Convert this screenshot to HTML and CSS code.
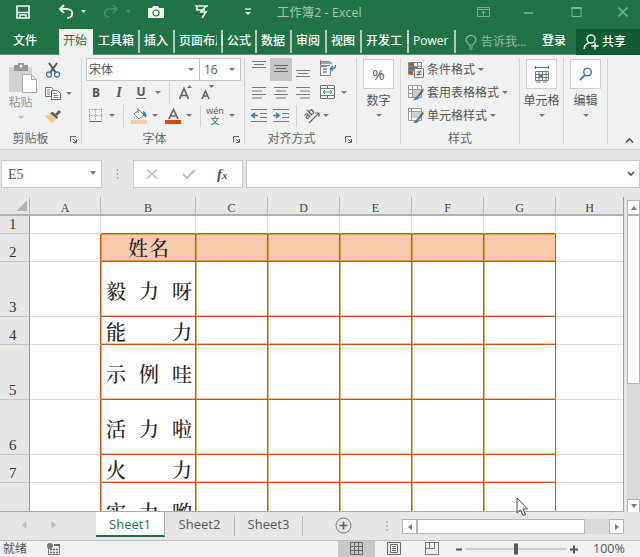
FILE: index.html
```html
<!DOCTYPE html>
<html lang="zh-CN">
<head>
<meta charset="utf-8">
<title>工作簿2 - Excel</title>
<link rel="stylesheet" href="styles.css">
</head>
<body>
<div class="app">
<header class="titlebar">
  <svg width="14" height="14" viewBox="0 0 14 14"><path d="M1 1h12v12H1z" fill="none" stroke="#f2f7f4" stroke-width="1.6"/><path d="M1 7.500h12" stroke="#f2f7f4" stroke-width="1.500"/><path d="M4 13v-3h6v3" fill="none" stroke="#f2f7f4" stroke-width="1.500"/></svg>
  <svg width="32" height="16" viewBox="0 0 32 16"><path d="M6 1L2 5l4 4M2.500 5H9c7 0 7 9 0 9" fill="none" stroke="#f2f7f4" stroke-width="2"/><path d="M23 6h5l-2.500 3z" fill="#e4efe8"/></svg>
  <svg width="32" height="16" viewBox="0 0 32 16"><path d="M11 1l4 4-4 4M14.500 5H8C1 5 1 13 7 13" fill="none" stroke="#4f8d69" stroke-width="1.500"/><path d="M24 6h5l-2.500 3z" fill="#4f8d69"/></svg>
  <svg width="18" height="14" viewBox="0 0 18 14"><path d="M1 3h4l1-2h5l1 2h5v10H1z" fill="#f2f7f4"/><circle cx="9" cy="8" r="3" fill="none" stroke="#217346" stroke-width="1.200"/></svg>
  <svg width="16" height="16" viewBox="0 0 16 16"><path d="M0 2h13M2 2v4h8M11 2L6 8h5l-4 6" fill="none" stroke="#f2f7f4" stroke-width="1.600"/></svg>
  <svg width="8" height="10" viewBox="0 0 8 10"><path d="M1 2h6" stroke="#f2f7f4" stroke-width="1.300"/><path d="M1 5h6L4 8z" fill="#f2f7f4"/></svg>
  <span class="doc">工作簿2 - Excel</span>
  <svg width="14" height="12" viewBox="0 0 14 12"><path d="M.5 1.500h12v9H.5zM.5 3.500h12M6.500 9.500V5M4.500 7l2-2 2 2" fill="none" stroke="#80ae93"/></svg>
  <svg width="10" height="12" viewBox="0 0 10 12"><path d="M0 7h9" stroke="#80ae93" stroke-width="1.500"/></svg>
  <svg width="12" height="12" viewBox="0 0 12 12"><path d="M1 1.500h9v9H1z" fill="none" stroke="#80ae93"/><path d="M.5 2h10" stroke="#80ae93" stroke-width="2"/></svg>
  <svg width="12" height="12" viewBox="0 0 12 12"><path d="M1.500 1.500l9 9M10.500 1.500l-9 9" stroke="#80ae93" stroke-width="1.700"/></svg>
</header>
<nav class="tabs">
  <span class="tab file">文件</span><span class="tab active">开始</span><span class="tab cut">工具箱</span><span class="tab cut">插入</span><span class="tab cut clip">页面布局</span><span class="tab cut">公式</span><span class="tab cut">数据</span><span class="tab cut">审阅</span><span class="tab cut">视图</span><span class="tab cut clip">开发工具</span><span class="tab cut">Power</span>
  <span class="tell"><svg width="12" height="15" viewBox="0 0 12 15"><path d="M4 10C3 8 1 7 1 5a5 4.500 0 0 1 10 0c0 2-2 3-3 5zM4 12h4M4.500 14h3" fill="none" stroke="#91baa1" stroke-width="1.200"/></svg>告诉我...</span>
  <span class="tab">登录</span>
  <span class="share"><svg width="16" height="16" viewBox="0 0 16 16"><circle cx="8" cy="5" r="4" fill="none" stroke="#fff" stroke-width="1.400"/><path d="M1 15c.3-3 2-5 5-6.300M12 8.500v7M8.500 12h7" fill="none" stroke="#fff" stroke-width="1.400"/></svg>共享</span>
</nav>
<section class="ribbon">
  <div class="group clipboard">
    <div class="body clipbody">
      <div class="paste">
        <svg width="30" height="32" viewBox="0 0 30 32"><path d="M1 5h23v25H1z" fill="#d3d1d4"/><path d="M6 3h4V1h6v2h4v6H6z" fill="#99979a"/><circle cx="13" cy="4" r="1.500" fill="#eee"/><path d="M14.500 12.500h9l5 5v13h-14z" fill="#fff" stroke="#a9a9ab"/><path d="M23.500 12.500v5h5" fill="none" stroke="#a9a9ab"/></svg>
        <span>粘贴</span><i class="arr pale"></i>
      </div>
      <div class="clips">
        <svg width="16" height="16" viewBox="0 0 16 16"><path d="M4 1l7 10M12 1L5 11" stroke="#555" stroke-width="2" fill="none"/><circle cx="4" cy="12.500" r="2.500" fill="none" stroke="#3f81ab" stroke-width="1.300"/><circle cx="12" cy="12.500" r="2.500" fill="none" stroke="#3f81ab" stroke-width="1.300"/></svg>
        <div class="pair"><svg width="16" height="15" viewBox="0 0 16 15"><path d="M.5 1.500h6l2 2v7h-8z" fill="#fff" stroke="#777"/><path d="M6.500 4.500h6l3 3v6h-9z" fill="#fff" stroke="#666"/><path d="M2 4h3M2 6h3M2 8h3M8.500 7.500h3M8.500 9.500h5M8.500 11.500h5" stroke="#5b93a0"/></svg><i class="arr"></i></div>
        <svg width="16" height="15" viewBox="0 0 16 15"><path d="M0 7l6-2 5 5-4 4z" fill="#f8c583"/><path d="M5 4l3-1 5 5-1 2z" fill="#555"/><path d="M10 5l4-4 2 2-4 4z" fill="#606060"/></svg>
      </div>
    </div>
    <div class="name">剪贴板</div><svg class="launch" width="7" height="7" viewBox="0 0 7 7"><path d="M.5 6V.5H6M3 3l3 3M6.500 3v3.500H3" fill="none" stroke="#666"/></svg>
  </div>
  <div class="group font">
    <div class="body">
      <div class="combos"><div class="combo">宋体<i class="arr"></i></div><div class="combo">16<i class="arr"></i></div></div>
      <div class="fr fr2"><b>B</b><em>I</em><u>U</u><i class="arr"></i><s></s>
        <svg width="16" height="16" viewBox="0 0 16 16"><path d="M1.500 14L6 3.500 10.500 14M3 10.500h6" fill="none" stroke="#666" stroke-width="1.700"/><path d="M9 3l2.500-3L14 3z" fill="#3f81ab"/></svg>
        <svg width="16" height="16" viewBox="0 0 16 16"><path d="M2 14l3.500-8L9 14M3 11h5" fill="none" stroke="#666" stroke-width="1.600"/><path d="M9 0h5l-2.500 3z" fill="#3f81ab"/></svg></div>
      <div class="fr fr3">
        <svg width="14" height="15" viewBox="0 0 14 15"><path d="M.5 1v11M6.500 1v11M12.500 1v11M0 1.500h13M0 7.500h13" stroke="#888" stroke-dasharray="1 1.400"/><path d="M0 13.500h13" stroke="#666"/></svg><i class="arr"></i><s></s>
        <svg width="16" height="16" viewBox="0 0 16 16"><path d="M3 6l5-4 5 5-5 4z" fill="#fff" stroke="#777"/><path d="M7 5V0" stroke="#777"/><path d="M12 3c3 1 4 3 3 7l-3-3z" fill="#3f81ab"/><path d="M0 12h16v4H0z" fill="#f8cbad"/></svg><i class="arr"></i>
        <svg width="16" height="16" viewBox="0 0 16 16"><path d="M4 11l4.500-9.500L13 11M5.500 8h6" fill="none" stroke="#666" stroke-width="1.700"/><path d="M0 12h16v4H0z" fill="#d84a10"/></svg><i class="arr"></i><s></s>
        <span class="wen"><span>wén</span><strong>文</strong></span><i class="arr"></i></div>
    </div>
    <div class="name">字体</div><svg class="launch" width="7" height="7" viewBox="0 0 7 7"><path d="M.5 6V.5H6M3 3l3 3M6.500 3v3.500H3" fill="none" stroke="#666"/></svg>
  </div>
  <div class="group align">
    <div class="body">
      <div class="ar ar1">
        <svg width="14" height="22" viewBox="0 0 14 22"><path d="M0 3.500h14M2 6.500h10M0 9.500h14" stroke="#777"/></svg>
        <span class="on"><svg width="14" height="22" viewBox="0 0 14 22"><path d="M0 7.500h14M2 10.500h10M0 13.500h14" stroke="#666"/></svg></span>
        <svg width="14" height="22" viewBox="0 0 14 22"><path d="M0 12.500h14M2 15.500h10M0 18.500h14" stroke="#777"/></svg>
        <svg class="wrap" width="16" height="16" viewBox="0 0 16 16"><path d="M.5 0v16M0 1.500h10M0 6.500h7M10.500 8v7.500H0M0 5.500h10" fill="none" stroke="#888"/><path d="M0 3h12M3 9h4M3 12h4" stroke="#555"/><path d="M15.500 5c0 4-2 3.500-5 3.500M13 6l-2.500 2.500L13 11" fill="none" stroke="#3f81ab" stroke-width="1.400"/></svg></div>
      <div class="ar ar2">
        <svg width="14" height="12" viewBox="0 0 14 12"><path d="M0 .5h14M0 4h10M0 7.500h14M0 11h10" stroke="#777"/></svg>
        <svg width="14" height="12" viewBox="0 0 14 12"><path d="M0 .5h14M2 4h10M0 7.500h14M2 11h10" stroke="#777"/></svg>
        <svg width="14" height="12" viewBox="0 0 14 12"><path d="M0 .5h14M4 4h10M0 7.500h14M4 11h10" stroke="#777"/></svg>
        <svg width="16" height="15" viewBox="0 0 16 15"><path d="M.5.5h14v13H.5zM.5 3.500h14M.5 10.500h14M7.500.5v3M7.500 10.500v3" fill="#fff" stroke="#777"/><path d="M3 7h9M5 5L3 7l2 2M10 5l2 2-2 2" fill="none" stroke="#3f81ab"/></svg><i class="arr"></i></div>
      <div class="ar ar3">
        <svg width="16" height="14" viewBox="0 0 16 14"><path d="M0 .5h16M9 4.500h7M9 8.500h7M0 12.500h16" stroke="#777"/><path d="M1 6.500h6M4 4L1 6.500 4 9" fill="none" stroke="#3f81ab" stroke-width="1.700"/></svg>
        <svg width="16" height="14" viewBox="0 0 16 14"><path d="M0 .5h16M9 4.500h7M9 8.500h7M0 12.500h16" stroke="#777"/><path d="M0 6.500h6M3 4l3 2.500L3 9" fill="none" stroke="#3f81ab" stroke-width="1.700"/></svg><s></s>
        <span class="ab"><span>ab</span><svg width="14" height="14" viewBox="0 0 14 14"><path d="M2 13L12 3M8 3h4v4" fill="none" stroke="#666" stroke-width="1.200"/></svg></span><i class="arr"></i></div>
    </div>
    <div class="name">对齐方式</div><svg class="launch" width="7" height="7" viewBox="0 0 7 7"><path d="M.5 6V.5H6M3 3l3 3M6.500 3v3.500H3" fill="none" stroke="#666"/></svg>
  </div>
  <div class="group big"><div class="box">%</div><span>数字</span><i class="arr"></i></div>
  <div class="group styles">
    <div class="body">
      <div class="st"><svg width="16" height="16" viewBox="0 0 16 16"><path d="M.5.5h13v12H.5zM.5 4.500h13M.5 8.500h13M9.500.5v12" fill="#fff" stroke="#888"/><path d="M1 1h5v3H1zM1 9h4v3H1z" fill="#d84a10"/><path d="M1 5h8v3H1z" fill="#3f81ab"/><path d="M6.500 6.500h9v9h-9z" fill="#fff" stroke="#777"/><path d="M8.500 10h5M8.500 12.500h5M12.500 8.500l-3 5.500" stroke="#555"/></svg>条件格式<i class="arr"></i></div>
      <div class="st"><svg width="16" height="16" viewBox="0 0 16 16"><path d="M.5.5h13v12H.5zM.5 4.500h13M.5 8.500h13M4.500.5v12M9.500.5v12" fill="#fff" stroke="#999"/><path d="M5 5h8v7H5z" fill="#ccc"/><path d="M15.500 3L9 11l2 1 4.500-6z" fill="#666"/><path d="M5 15c2-1 2-4 5-4l1 2c-1 2-3 2-6 2z" fill="#3f81ab"/></svg>套用表格格式<i class="arr"></i></div>
      <div class="st"><svg width="16" height="16" viewBox="0 0 16 16"><path d="M.5.5h13v12H.5zM.5 3.500h13M3.500.5v12" fill="#fff" stroke="#999"/><path d="M4 4h9v6H4z" fill="#ccd0d2"/><path d="M15.500 3L9 11l2 1 4.500-6z" fill="#666"/><path d="M5 15c2-1 2-4 5-4l1 2c-1 2-3 2-6 2z" fill="#3f81ab"/></svg>单元格样式<i class="arr"></i></div>
    </div>
    <div class="name">样式</div>
  </div>
  <div class="group big"><div class="box"><svg width="16" height="17" viewBox="0 0 16 17"><path d="M1.500 5.500h13v9h-13zM1.500 8.500h13M1.500 11.500h13M5 5.500v9M8.500 5.500v9M12 5.500v9" fill="#fff" stroke="#777"/><path d="M5 8h4v3H5z" fill="#3f81ab"/><path d="M2 1.500h12M1.500 0v3M14.500 0v3" stroke="#3f81ab"/><path d="M2 16h5M9 16h4" stroke="#777"/></svg></div><span>单元格</span><i class="arr"></i></div>
  <div class="group big"><div class="box"><svg width="14" height="14" viewBox="0 0 14 14"><circle cx="8.500" cy="5" r="3.800" fill="none" stroke="#3f81ab" stroke-width="1.500"/><path d="M6 8l-5 5" stroke="#3f81ab" stroke-width="2.200"/></svg></div><span>编辑</span><i class="arr"></i></div>
  <div class="collapse"><svg width="9" height="7" viewBox="0 0 9 7"><path d="M1 5.500L4.500 2 8 5.500" fill="none" stroke="#555" stroke-width="1.700"/></svg></div>
</section>
<section class="formula">
  <div class="ref">E5<i class="arr"></i></div>
  <svg width="30" height="12" viewBox="0 0 30 12"><path d="M15.500 1v2M15.500 5v2M15.500 9v2" stroke="#aaa" stroke-width="1.500"/></svg>
  <div class="fx">
    <svg width="12" height="12" viewBox="0 0 12 12"><path d="M1 1.500l10 9M11 1.500l-10 9" stroke="#bbb" stroke-width="1.400"/></svg>
    <svg width="14" height="12" viewBox="0 0 14 12"><path d="M1 6l4 4 8-8" fill="none" stroke="#bfbfbf" stroke-width="2.200"/></svg>
    <em>f<small>x</small></em>
  </div>
  <div class="input"><svg width="8" height="6" viewBox="0 0 8 6"><path d="M1 1l3 3 3-3" fill="none" stroke="#555" stroke-width="1.700"/></svg></div>
</section>
<main class="work">
  <div class="sheet">
    <div class="row head"><span class="corner"></span><span>A</span><span>B</span><span>C</span><span>D</span><span>E</span><span>F</span><span>G</span><span>H</span></div>
    <div class="row r1"><span class="num">1</span><span></span><span></span><span></span><span></span><span></span><span></span><span></span><span></span></div>
    <div class="row mid data top"><span class="num">2</span><span></span><span class="txt title">姓名</span><span></span><span></span><span></span><span></span><span></span><span></span></div>
    <div class="row tall data"><span class="num">3</span><span></span><span class="txt"><b>毅</b><b>力</b><b>呀</b></span><span></span><span></span><span></span><span></span><span></span><span></span></div>
    <div class="row mid data"><span class="num">4</span><span></span><span class="txt"><b>能</b><b>力</b></span><span></span><span></span><span></span><span></span><span></span><span></span></div>
    <div class="row tall data"><span class="num">5</span><span></span><span class="txt"><b>示</b><b>例</b><b>哇</b></span><span></span><span></span><span></span><span></span><span></span><span></span></div>
    <div class="row tall data"><span class="num">6</span><span></span><span class="txt"><b>活</b><b>力</b><b>啦</b></span><span></span><span></span><span></span><span></span><span></span><span></span></div>
    <div class="row mid data"><span class="num">7</span><span></span><span class="txt"><b>火</b><b>力</b></span><span></span><span></span><span></span><span></span><span></span><span></span></div>
    <div class="row tall data"><span class="num"></span><span></span><span class="txt"><b>实</b><b>力</b><b>哟</b></span><span></span><span></span><span></span><span></span><span></span><span></span></div>
  </div>
  <div class="vscroll"><div class="btn"><i class="arr up"></i></div><div class="thumb"></div><div class="track"></div><div class="btn"><i class="arr"></i></div></div>
</main>
<footer class="sheets">
  <div class="nav"><svg width="34" height="8" viewBox="0 0 34 8"><path d="M4.500 0v8L0 4zM29.500 0v8L34 4z" fill="#bcbcbc"/></svg></div>
  <span class="s current">Sheet1</span><span class="s">Sheet2</span><span class="s">Sheet3</span>
  <svg class="add" width="17" height="17" viewBox="0 0 17 17"><circle cx="8.500" cy="8.500" r="7.500" fill="none" stroke="#777"/><path d="M8.500 4.500v8M4.500 8.500h8" stroke="#666" stroke-width="1.700"/></svg>
  <svg class="dots" width="4" height="12" viewBox="0 0 4 12"><path d="M2 1v2M2 5v2M2 9v2" stroke="#aaa" stroke-width="1.500"/></svg>
  <div class="hscroll"><div class="btn"><i class="arr left"></i></div><div class="thumb"></div><div class="track"></div><div class="btn"><i class="arr right"></i></div></div>
</footer>
<footer class="status">
  <span>就绪</span>
  <svg class="macro" width="13" height="12" viewBox="0 0 13 12"><path d="M1.500 4.500v7h11v-10H7" fill="none" stroke="#777"/><path d="M3 6.500h8M3 9.500h8" stroke="#666" stroke-width="1.500" stroke-dasharray="2 1"/><circle cx="3" cy="3" r="3" fill="#777"/><path d="M7 1h6v2H7z" fill="#666"/></svg>
  <div class="view sel"><svg width="14" height="14" viewBox="0 0 14 14"><path d="M.5.5h12v12H.5zM.5 4.500h12M.5 8.500h12M4.500.5v12M8.500.5v12" fill="none" stroke="#666"/></svg></div>
  <div class="view"><svg width="14" height="14" viewBox="0 0 14 14"><path d="M.5.5h13v12H.5zM3.500 2.500h7v8h-7zM5 4.500h4M5 6.500h4M5 8.500h4" fill="none" stroke="#666"/></svg></div>
  <div class="view"><svg width="14" height="14" viewBox="0 0 14 14"><path d="M.5.5h13v12H.5zM4.500.5v6h5v-6M.5 6.500h4" fill="none" stroke="#777"/></svg></div>
  <svg class="zoom" width="122" height="12" viewBox="0 0 122 12"><path d="M0 6.500h6M114 6.500h8M118 2.500v8" stroke="#555" stroke-width="2"/><path d="M10 6h100" stroke="#aaa"/><path d="M58 .5h4v11h-4z" fill="#555"/></svg>
  <span class="pct">100%</span>
</footer>
<svg class="pointer" width="13" height="20" viewBox="0 0 13 20"><path d="M1 1v15l3.500-3.300L7 18.500l2.500-1L7 12h4.500z" fill="#fff" stroke="#444"/></svg>
</div>
</body>
</html>
```
FILE: styles.css
```css
* { box-sizing: border-box; }
body { margin: 0; font: 12px/14px "Open Sans", "Noto Sans CJK SC", sans-serif; color: #555; }
svg { display: block; flex: none; }
i, em, s, u { text-decoration: none; }
.app { width: 640px; height: 557px; overflow: hidden; display: flex; flex-direction: column; background: #e6e6e6; position: relative; }

.titlebar { height: 29px; flex: none; background: #217346; display: grid; grid-template-columns: 42px 44px 45px 48px 49px 26px 207px 47px 47px 46px 23px; padding: 0 0 6px 16px; align-items: center; }
.doc { color: #a6c8b4; font-size: 12.3px; letter-spacing: .1px; white-space: nowrap; padding: 3px 0 0 7px; }

.tabs { height: 26px; flex: none; background: #217346; border-bottom: 1px solid #5f9a78; display: grid; grid-template-columns: 59px 34px 47px 35px 48px 34px 35px 35px 35px 47px 47px 76px 44px 64px; }
.tab { color: #fff; white-space: nowrap; line-height: 24px; font-weight: 500; }
.file { padding-left: 13px; }
.active { background: #f0f1f1; color: #217346; padding-left: 4px; height: 26px; font-weight: 400; }
.cut { border-right: 2px solid #b8c4bd; height: 23px; margin-top: 1px; padding-left: 4px; line-height: 22px; overflow: hidden; }
.active + .cut { padding-left: 5px; }
.clip { border-right: 0; box-shadow: inset -2px 0 #b8c4bd; position: relative; }
.clip::after { content: ""; position: absolute; right: 2px; top: 0; width: 4px; height: 23px; background: #217346; }
.clip { background: linear-gradient(#b8c4bd, #b8c4bd) right / 2px 100% no-repeat; }
.tell { display: flex; align-items: center; gap: 4px; color: #91baa1; padding-left: 9px; white-space: nowrap; }
.tell + .tab { padding-left: 10px; }
.share { background: #0e5c2f; color: #fff; display: flex; align-items: center; gap: 3px; padding-left: 7px; font-weight: 500; }

.ribbon { height: 95px; flex: none; background: #f0f1f1; border-bottom: 1px solid #d2d2d2; display: grid; grid-template-columns: 82px 163px 112px 44px 119px 44px 44px 32px; }
.group { height: 86px; margin-top: 3px; border-right: 1px solid #d5d5d5; display: grid; grid-template-columns: 1fr auto; grid-template-rows: 70px 16px; }
.body { grid-column: 1 / 3; }
.name { text-align: center; line-height: 16px; padding-top: 3px; color: #666; }
.launch { align-self: center; margin: 6px 4px 0 0; }
.clipboard .name { padding-right: 9px; }
.font .name { padding-left: 1px; padding-right: 7px; }
.align .name { padding-right: 7px; }
.styles .name { grid-column: 1 / 3; }
.arr { display: block; justify-self: center; border: solid transparent; border-width: 3px 3px 0; border-top-color: #777; width: 0; height: 0; flex: none; }
.pale { border-top-color: #bbb; }
.ribbon s { width: 1px; height: 22px; background: #d5d5d5; justify-self: center; }
.clipbody { display: grid; grid-template-columns: 45px 1fr; }
.paste { display: flex; flex-direction: column; align-items: center; padding: 4px 4px 0 0; color: #999; gap: 1px; }
.paste span { font-size: 12px; margin: 1px 0 5px; }
.paste svg { margin-left: 4px; }
.clips { display: grid; grid-template-rows: 23px 24px 22px; align-items: center; }
.pair { display: flex; align-items: center; gap: 5px; }

.combos { display: grid; grid-template-columns: 114px 41px; margin-left: 4px; height: 23px; }
.combo { background: #fff; border: 1px solid #c6c6c6; display: flex; align-items: center; justify-content: space-between; padding: 0 5px 0 2px; color: #555; }
.combo + .combo { border-left: 0; padding-left: 4px; }
.fr { display: grid; align-items: center; height: 23px; justify-items: center; }
.fr b, .fr em, .fr u { font-size: 12px; font-family: "Open Sans", sans-serif; font-weight: 700; }
.fr em { font-style: italic; font-family: "Liberation Serif", serif; font-size: 14px; }
.fr u { border-bottom: 1px solid #666; line-height: 12px; }
.fr2 { grid-template-columns: 28px 18px 26px 8px 14px 20px 24px; }
.fr3 { grid-template-columns: 28px 4px 18px 14px 18px 18px 14px 8px 22px 12px; }
.wen { font-size: 9px; line-height: 8px; display: flex; flex-direction: column; align-items: center; gap: 1px; }
.wen strong { font-size: 9px; line-height: 9px; color: #34848b; font-weight: 500; }

.ar { display: grid; align-items: center; justify-items: center; height: 23px; }
.ar1, .ar2 { grid-template-columns: 27px 17px 27px 24px 8px; }
.ar1 > svg, .on { align-self: start; }
.ar1 > .wrap { margin-top: 2px; }
.on { background: #c5c5c5; width: 22px; height: 23px; display: flex; justify-content: center; }
.ar3 { grid-template-columns: 28px 16px 14px 18px 10px; }
.ab { display: grid; width: 16px; height: 16px; font-size: 10px; line-height: 10px; font-weight: 600; letter-spacing: -.5px; }
.ab > * { grid-area: 1 / 1; }
.ab span { transform: rotate(-42deg) translate(-1px, -1px); width: 12px; height: 10px; }
.ab svg { margin: 2px 0 0 3px; }

.big { display: flex; flex-direction: column; align-items: center; padding-top: 1px; }
.box { width: 31px; height: 30px; flex: none; border: 1px solid #cecece; background: #fbfbfb; display: flex; align-items: center; justify-content: center; font-size: 15px; }
.big > span { margin: 5px 0 6px; white-space: nowrap; }
.st { height: 23px; display: flex; align-items: center; gap: 3px; padding-left: 7px; white-space: nowrap; color: #555; }
.collapse { padding: 82px 0 0 17px; }

.formula { height: 47px; flex: none; display: grid; grid-template-columns: 102px 31px 110px 3px 394px; padding-top: 10px; align-items: start; }
.formula > svg { margin-top: 8px; }
.ref, .fx, .input { height: 28px; background: #fff; border: 1px solid #cacaca; display: flex; align-items: center; }
.ref { margin-left: 1px; justify-content: space-between; padding: 2px 5px 0 6px; font: 14px "Liberation Serif", serif; }
.ref .arr { margin-top: -5px; border-width: 4px 3.5px 0; }
.fx { gap: 24px; padding-left: 12px; }
.fx em { font: italic bold 15px "Liberation Serif", serif; margin-left: -3px; }
.fx small { font-size: 11px; }
.input { grid-column: 5; justify-content: flex-end; padding-right: 4px; }

.work { height: 315px; flex: none; display: grid; grid-template-columns: 624px 16px; }
.sheet { overflow: hidden; border-right: 1px solid #a0a0a0; border-bottom: 1px solid #aaa; background: #fff; }
.row { display: grid; grid-template-columns: 30px 71px 95px 72px 72px 72px 72px 72px 67px; height: 28px; }
.row > span { border-right: 1px solid #ddd; border-bottom: 1px solid #ddd; }
.tall { height: 55px; }
.r1 { height: 18px; }
.row.head { height: 19px; background: #e6e6e6; }
.row.head > span { border-right-color: #b5b5b5; border-bottom: 2px solid #b0b0b0; text-align: center; font: 12px/22px "Liberation Serif", serif; color: #444; height: 19px; }
.row.head .corner { background: linear-gradient(135deg, transparent 50%, #b5b5b5 50%) 17px 4px / 10px 10px no-repeat; }
.row > .num { background: #e6e6e6; border-right-color: #999; border-bottom-color: #c5c5c5; font: 15px/15px "Liberation Serif", serif; color: #333; display: flex; align-items: flex-end; padding: 0 0 1px 9px; }
.data > span:nth-child(n+3):nth-child(-n+8) { border-color: #c8560f; box-shadow: inset 1px 0 #dfae70, inset 0 -1px #ecc49b; }
.data > span:nth-child(2) { border-right-color: #c8560f; }
.row > span:last-child { border-right: 0; }
.r1 > span:nth-child(n+3):nth-child(-n+8) { border-bottom-color: #c8560f; }
.top > span:nth-child(n+3):nth-child(-n+8) { background: #f8cbad; box-shadow: inset 1px 0 #d99a4a, inset 0 1px #d99a4a, inset 0 -1px #d99a4a; }
.txt { display: flex; align-items: center; justify-content: space-between; padding: 3px 3px 0 5px; font: 500 20px/20px "Noto Serif CJK SC", "Noto Sans CJK SC", serif; color: #222; }
.txt b { font-weight: 500; }
.row > .title { justify-content: center; font-size: 20px; letter-spacing: 1px; padding-top: 1px; }

.vscroll { margin: 3px 0 -1px 3px; display: grid; grid-template-rows: 15px 169px 1fr 14px; }
.btn { background: #fff; border: 1px solid #b5b5b5; display: flex; align-items: center; justify-content: center; }
.thumb { background: #fff; border: 1px solid #b5b5b5; }
.track { background: #d9d9d9; }
.btn .arr { border-width: 4px 3.5px 0; }
.btn .up { transform: rotate(180deg); }
.btn .left { transform: rotate(90deg); }
.btn .right { transform: rotate(-90deg); }

.sheets { height: 29px; flex: none; border-bottom: 1px solid #c0c0c0; display: grid; grid-template-columns: 96px 69px 70px 68px 65px 34px 222px; background: #e6e6e6; }
.nav { padding: 9px 0 0 22px; }
.s { height: 20px; margin-top: 4px; border-right: 1px solid #b8b8b8; text-align: center; font: 13px/17px "Open Sans", sans-serif; color: #50594f; }
.current { background: #fff; height: 25px; margin-top: 0; line-height: 25px; border-bottom: 2px solid #217346; color: #217346; border-right-color: #aaa; }
.add { margin: 5px 0 0 32px; }
.dots { margin: 8px 0 0 17px; }
.hscroll { height: 15px; margin-top: 7px; display: grid; grid-template-columns: 15px 168px 24px 15px; }

.status { height: 16px; flex: none; background: #f0f1f1; display: grid; grid-template-columns: 47px 291px 37px 38px 43px 134px 50px; align-items: center; }
.status > span:first-child { padding-left: 3px; }
.status .pct { font-size: 12.5px; padding-left: 3px; }
.view { display: flex; height: 16px; align-items: center; justify-content: center; }
.view:nth-of-type(3) { padding-right: 5px; }
.sel { background: #c8c8c8; }
.pointer { position: absolute; left: 516px; top: 497px; z-index: 2; }
```
